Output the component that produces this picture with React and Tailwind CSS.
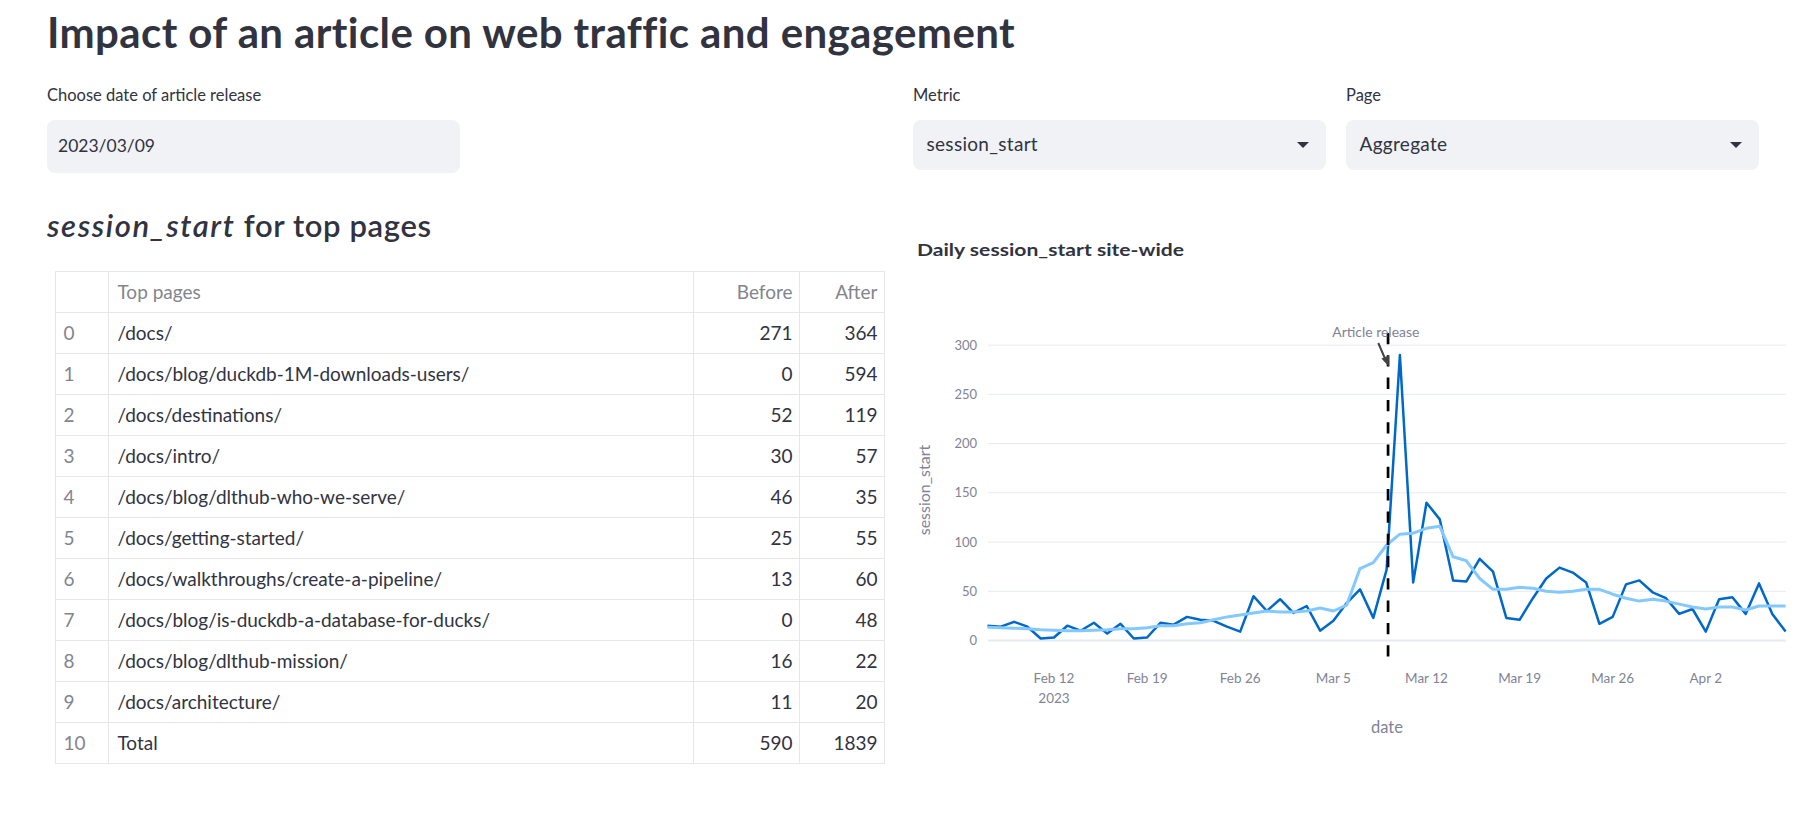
import React from "react";

// Daily session_start counts, Feb 7 -> Apr 8 2023
const daily = [
  15, 14, 19, 14, 2, 3, 15, 10, 18, 7, 17, 2, 3, 18, 16, 24, 21, 20, 14, 9, 45,
  30, 42, 28, 35, 10, 20, 38, 52, 23, 72, 290, 59, 140, 123, 61, 60, 83, 70, 23,
  21, 43, 63, 74, 69, 59, 17, 24, 57, 61, 49, 43, 27, 32, 9, 42, 44, 27, 58, 27,
  9,
];

// 7 day rolling average
const rolling = [
  13.5, 13, 12.5, 12, 11, 10.5, 10, 10, 10.5, 11, 12, 12, 13, 15, 15, 17, 18,
  21, 24, 26, 28, 30, 29, 29, 30, 33, 30, 36, 73, 79, 97, 108, 109, 114, 116,
  85, 81, 63, 52, 52, 54, 53, 50, 49, 50, 52, 52, 47, 43, 40, 42, 40, 37, 34,
  32, 34, 34, 31, 35, 35, 35,
];

const topPages = [
  ["/docs/", 271, 364],
  ["/docs/blog/duckdb-1M-downloads-users/", 0, 594],
  ["/docs/destinations/", 52, 119],
  ["/docs/intro/", 30, 57],
  ["/docs/blog/dlthub-who-we-serve/", 46, 35],
  ["/docs/getting-started/", 25, 55],
  ["/docs/walkthroughs/create-a-pipeline/", 13, 60],
  ["/docs/blog/is-duckdb-a-database-for-ducks/", 0, 48],
  ["/docs/blog/dlthub-mission/", 16, 22],
  ["/docs/architecture/", 11, 20],
  ["Total", 590, 1839],
];

const xTicks = [
  { i: 5, label: "Feb 12", year: "2023" },
  { i: 12, label: "Feb 19" },
  { i: 19, label: "Feb 26" },
  { i: 26, label: "Mar 5" },
  { i: 33, label: "Mar 12" },
  { i: 40, label: "Mar 19" },
  { i: 47, label: "Mar 26" },
  { i: 54, label: "Apr 2" },
];

// plot area in svg coords
const px = (i) => 74.5 + i * 13.302;
const py = (v) => 450.5 - v * 0.9845;
const toPath = (arr) =>
  arr.map((v, i) => `${i ? "L" : "M"}${px(i).toFixed(1)} ${py(v).toFixed(1)}`).join(" ");

function Label({ children }) {
  return <div className="text-[16.5px] leading-[20px] text-[#31333f]">{children}</div>;
}

function SelectBox({ value }) {
  return (
    <div className="mt-[15px] flex h-[50px] items-center justify-between rounded-lg bg-[#f0f2f6] pl-[13.5px] pr-[16.5px] text-[19px] tracking-[0.3px]">
      <span>{value}</span>
      <svg width="12" height="6" viewBox="0 0 12 6">
        <path d="M0 0 L12 0 L6 6 Z" fill="#31333f" />
      </svg>
    </div>
  );
}

function TrafficChart() {
  const grid = [50, 100, 150, 200, 250, 300];
  const release = px(30) + 1.5;
  return (
    <svg width="903" height="560" className="block overflow-visible" style={{ fontFamily: "Lato, sans-serif" }}>
      <text x="4" y="66" fontSize="17" fontWeight="700" fill="#31333f" textLength="267" lengthAdjust="spacingAndGlyphs">
        Daily session_start site-wide
      </text>

      {grid.map((v) => (
        <line key={v} x1="75" x2="873" y1={py(v)} y2={py(v)} stroke="#e6eaf1" strokeWidth="1" />
      ))}
      <line x1="75" x2="873" y1={py(0)} y2={py(0)} stroke="#e6eaf1" strokeWidth="2" />

      {[0, ...grid].map((v) => (
        <text key={v} x="64" y={py(v) + 4.5} fontSize="13" fill="#808495" textAnchor="end">
          {v}
        </text>
      ))}

      {xTicks.map((t) => (
        <g key={t.label}>
          <text x={px(t.i)} y="493" fontSize="13.5" fill="#808495" textAnchor="middle">
            {t.label}
          </text>
          {t.year && (
            <text x={px(t.i)} y="513" fontSize="13.5" fill="#808495" textAnchor="middle">
              {t.year}
            </text>
          )}
        </g>
      ))}

      <text x="474" y="543" fontSize="16.5" fill="#808495" textAnchor="middle">
        date
      </text>
      <text
        x="0"
        y="0"
        fontSize="16"
        fill="#808495"
        textAnchor="middle"
        transform="translate(17 300) rotate(-90)"
      >
        session_start
      </text>

      <path d={toPath(daily)} fill="none" stroke="#0068c9" strokeWidth="2.5" strokeLinejoin="round" />
      <path d={toPath(rolling)} fill="none" stroke="#83c9ff" strokeWidth="3" strokeLinejoin="round" />

      <line x1={release} x2={release} y1="143" y2="467" stroke="#000" strokeWidth="2.7" strokeDasharray="11.3 11" />

      <text x="462.8" y="147.3" fontSize="14" fill="#7f8392" textAnchor="middle" textLength="87" lengthAdjust="spacingAndGlyphs">
        Article release
      </text>
      <line x1="465.3" y1="153" x2="472.6" y2="170" stroke="#444" strokeWidth="2" />
      <path d="M475.8 176.5 L468.4 168.4 L476 165.5 Z" fill="#444" />
    </svg>
  );
}

export default function App() {
  return (
    <div
      className="min-h-[821px] bg-white pl-[47px] pt-[8px] text-[#31333f]"
      style={{ fontFamily: "Lato, sans-serif" }}
    >
      <h1 className="text-[42px] font-bold leading-[48px] tracking-[0.4px]">
        Impact of an article on web traffic and engagement
      </h1>

      <div className="mt-[28.5px] grid w-[1711.5px] grid-cols-4 gap-x-[20.5px]">
        <div>
          <Label>Choose date of article release</Label>
          <div className="mt-[15px] flex h-[53px] items-center rounded-lg bg-[#f0f2f6] pl-[11px] text-[17.5px]">
            2023/03/09
          </div>
        </div>
        <div />
        <div>
          <Label>Metric</Label>
          <SelectBox value="session_start" />
        </div>
        <div>
          <Label>Page</Label>
          <SelectBox value="Aggregate" />
        </div>
      </div>

      <div className="mt-[17px] grid grid-cols-[845.5px_1fr] gap-x-[20.5px]">
        <div className="min-w-0">
          <h3 className="mt-[16px] text-[31px] font-semibold leading-[38px] tracking-[0.6px]">
            <em className="tracking-[1.6px]">session_start</em> for top pages
          </h3>
          <table className="ml-[7.5px] mt-[27px] w-[830px] border-collapse text-[19px]">
            <colgroup>
              <col className="w-[54px]" />
              <col className="w-[585px]" />
              <col className="w-[106px]" />
              <col className="w-[85px]" />
            </colgroup>
            <thead>
              <tr className="h-[41px] text-[#83858c]">
                <th className="border border-[#e6e7ea] px-2 pt-[2px] font-normal"></th>
                <th className="border border-[#e6e7ea] pl-2 pt-[2px] text-left font-normal">Top pages</th>
                <th className="border border-[#e6e7ea] pr-[6px] pt-[2px] text-right font-normal">Before</th>
                <th className="border border-[#e6e7ea] pr-[6px] pt-[2px] text-right font-normal">After</th>
              </tr>
            </thead>
            <tbody>
              {topPages.map(([page, before, after], idx) => (
                <tr key={page} className="h-[41px]">
                  <td className="border border-[#e6e7ea] px-2 pt-[2px] text-[#83858c]">{idx}</td>
                  <td className="border border-[#e6e7ea] pl-2 pt-[2px]">{page}</td>
                  <td className="border border-[#e6e7ea] pr-[6px] pt-[2px] text-right">{before}</td>
                  <td className="border border-[#e6e7ea] pr-[6px] pt-[2px] text-right">{after}</td>
                </tr>
              ))}
            </tbody>
          </table>
        </div>
        <div className="min-w-0">
          <TrafficChart />
        </div>
      </div>
    </div>
  );
}
